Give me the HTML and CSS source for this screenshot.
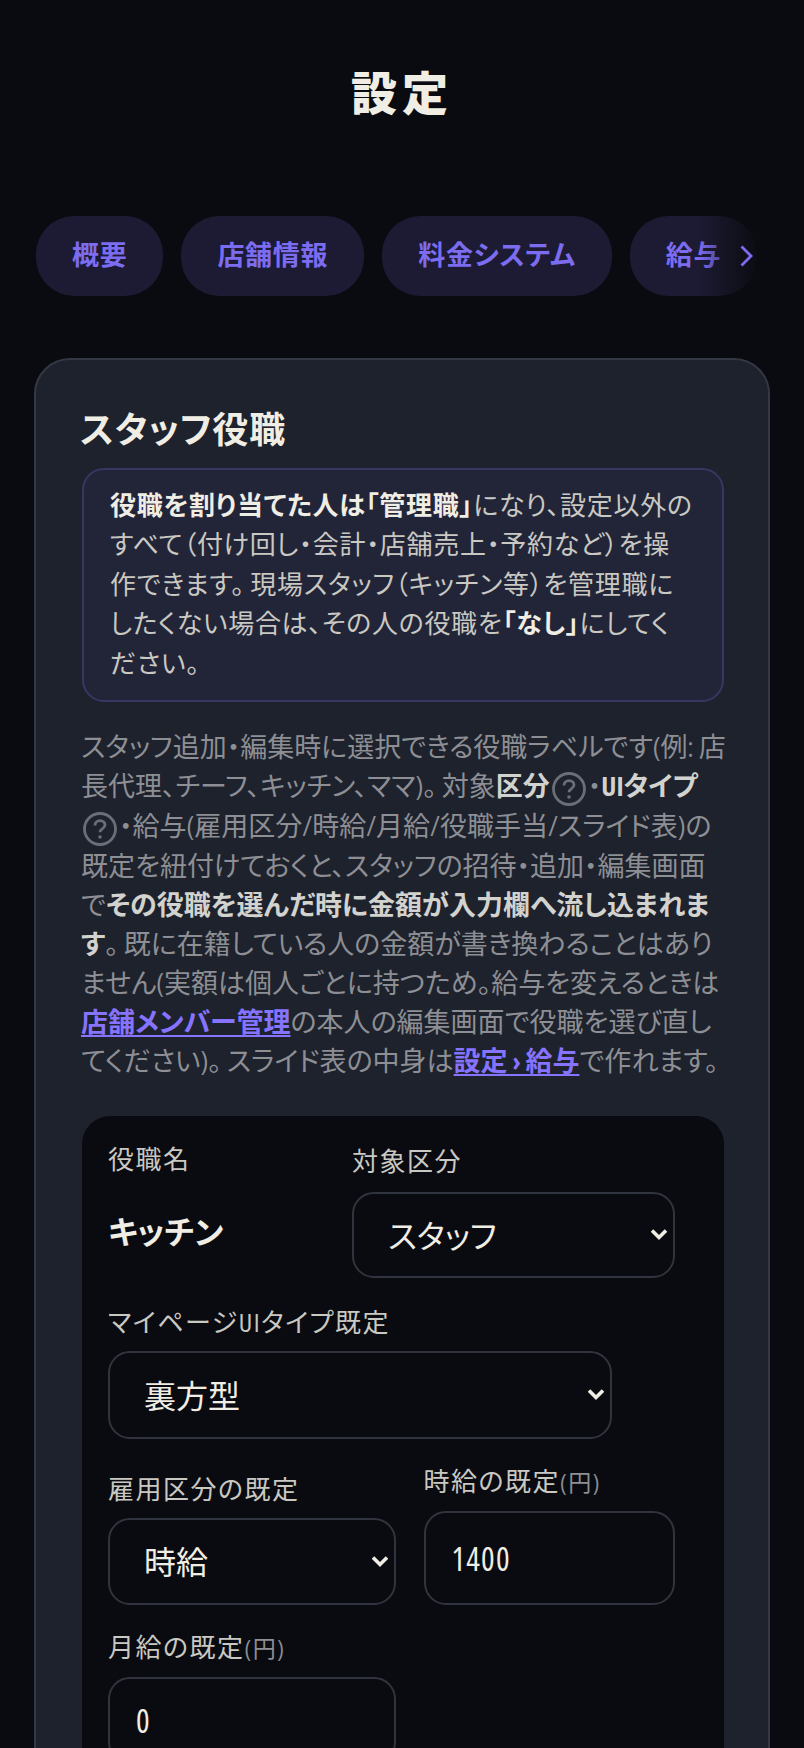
FILE: index.html
```html
<!DOCTYPE html>
<html lang="ja">
<head>
<meta charset="utf-8">
<title>設定</title>
<link rel="stylesheet" href="styles.css">
</head>
<body>
<main class="page">
  <h1 class="page-title">設定</h1>
  <nav class="tabs-wrap">
    <div class="tabs">
      <a class="tab">概要</a>
      <a class="tab">店舗情報</a>
      <a class="tab">料金システム</a>
      <a class="tab">給与</a>
      <a class="tab">通知</a>
    </div>
    <div class="tabs-fade">
      <svg class="tabs-chevron" viewBox="0 0 13 22" width="13" height="22"><path d="M1.5 1.5l9.5 9.5-9.5 9.5" fill="none" stroke="#7c6cf0" stroke-width="2.8"/></svg>
    </div>
  </nav>
  <section class="card">
    <h2 class="card-title">スタッフ役職</h2>
    <div class="callout"><strong>役職を割り当てた人は「管理職」</strong>になり、設定以外のすべて（付け回し・会計・店舗売上・予約など）を操作できます。 現場スタッフ（キッチン等）を管理職にしたくない場合は、その人の役職を<strong>「なし」</strong>にしてください。</div>
    <p class="desc">スタッフ追加・編集時に選択できる役職ラベルです(例: 店<br>長代理、チーフ、キッチン、ママ)。 対象<b>区分</b><svg class="help" viewBox="0 0 34 34" width="34" height="34"><circle cx="17" cy="17" r="15.5" fill="none" stroke="#6b6e77" stroke-width="2.8"/><path d="M12 13.5c0-3 2.2-4.8 5-4.8s5 1.8 5 4.3c0 3.6-5 3.6-5 7.2" fill="none" stroke="#6b6e77" stroke-width="2.8"/><circle cx="17" cy="25" r="1.8" fill="#6b6e77"/></svg>・<b>UIタイプ</b><br><svg class="help" viewBox="0 0 34 34" width="34" height="34"><circle cx="17" cy="17" r="15.5" fill="none" stroke="#6b6e77" stroke-width="2.8"/><path d="M12 13.5c0-3 2.2-4.8 5-4.8s5 1.8 5 4.3c0 3.6-5 3.6-5 7.2" fill="none" stroke="#6b6e77" stroke-width="2.8"/><circle cx="17" cy="25" r="1.8" fill="#6b6e77"/></svg>・給与(雇用区分/時給/月給/役職手当/スライド表)の<br>既定を紐付けておくと、スタッフの招待・追加・編集画面<br>で<b>その役職を選んだ時に金額が入力欄へ流し込まれま<br>す</b>。 既に在籍している人の金額が書き換わることはあり<br>ません(実額は個人ごとに持つため。給与を変えるときは<br><a class="link">店舗メンバー管理</a>の本人の編集画面で役職を選び直し<br>てください)。 スライド表の中身は<a class="link">設定 › 給与</a>で作れます。</p>
    <div class="role">
      <div class="row row-top">
        <div class="field field-name">
          <span class="label">役職名</span>
          <span class="role-name">キッチン</span>
        </div>
        <label class="field field-target">
          <span class="label label-target">対象区分</span>
          <span class="select-wrap">
            <select class="control control-select control-short"><option>スタッフ</option></select>
            <svg class="select-arrow select-arrow-short" viewBox="0 0 18 13" width="18" height="13"><path d="M2 2.5l7 7 7-7" fill="none" stroke="#f0ede4" stroke-width="3.6"/></svg>
          </span>
        </label>
      </div>
      <div class="row row-ui">
        <label class="field field-ui">
          <span class="label">マイページUIタイプ既定</span>
          <span class="select-wrap">
            <select class="control control-select control-ui"><option>裏方型</option></select>
            <svg class="select-arrow" viewBox="0 0 18 13" width="18" height="13"><path d="M2 2.5l7 7 7-7" fill="none" stroke="#f0ede4" stroke-width="3.6"/></svg>
          </span>
        </label>
      </div>
      <div class="row row-end">
        <label class="field field-half">
          <span class="label">雇用区分の既定</span>
          <span class="select-wrap">
            <select class="control control-select"><option>時給</option></select>
            <svg class="select-arrow" viewBox="0 0 18 13" width="18" height="13"><path d="M2 2.5l7 7 7-7" fill="none" stroke="#f0ede4" stroke-width="3.6"/></svg>
          </span>
        </label>
        <label class="field field-rate">
          <span class="label">時給の既定<small>(円)</small></span>
          <input class="control control-input control-tall" type="text" value="1400">
        </label>
      </div>
      <div class="row">
        <label class="field field-half">
          <span class="label">月給の既定<small>(円)</small></span>
          <input class="control control-input" type="text" value="0">
        </label>
      </div>
    </div>
  </section>
</main>
</body>
</html>
```
FILE: styles.css
```css
* { box-sizing: border-box; }
html { color-scheme: dark; }
body {
  margin: 0;
  height: 1748px;
  overflow: hidden;
  background: #0a0b10;
  color: #f0ede4;
  font-family: "Open Sans", "Noto Sans CJK JP", sans-serif;
  font-stretch: 75%;
  font-feature-settings: "palt";
  font-size: 26px;
}
.page { padding: 0 34px; }
.page-title {
  margin: 0;
  padding-top: 60px;
  height: 216px;
  font-size: 46px;
  line-height: 64px;
  font-weight: 900;
  letter-spacing: 5px;
  text-align: center;
}
.tabs-wrap { position: relative; margin-left: 2px; width: 726px; overflow: hidden; }
.tabs { display: flex; gap: 18px; }
.tab {
  flex: none;
  display: flex;
  align-items: center;
  height: 80px;
  padding: 0 36px 6px;
  border-radius: 38px;
  background: #1c1b33;
  color: #7c6cf0;
  font-size: 27px;
  font-weight: 700;
  letter-spacing: 0.7px;
}
.tabs-fade {
  position: absolute;
  top: 0;
  right: 0;
  bottom: 0;
  width: 64px;
  display: flex;
  align-items: center;
  justify-content: flex-end;
  padding-right: 9px;
  background: linear-gradient(to right, rgba(10,11,16,0), #0a0b10);
}
.card {
  margin-top: 62px;
  padding: 44px 44px 0 46px;
  border: 2px solid #343844;
  border-radius: 36px;
  background: #1e222d;
}
.card-title { margin: 0 0 0 -2px; font-size: 36px; line-height: 52px; font-weight: 700; letter-spacing: 0.9px; }
.callout {
  margin-top: 12px;
  padding: 16px 26px 17px;
  border: 2px solid #383662;
  border-radius: 22px;
  background: #222538;
  color: #c9c8c2;
  line-height: 39.4px;
  letter-spacing: 0.7px;
}
.callout strong { color: #f0ede4; font-weight: 700; }
.desc { margin: 25px 0 0 -1px; color: #8d8f94; font-size: 27px; line-height: 39px; white-space: nowrap; }
.desc b { color: #d2d2ce; font-weight: 700; }
.help { vertical-align: -10px; margin: 0 2px; }
.link { color: #8673ff; font-weight: 700; text-decoration: underline; text-underline-offset: 3px; }
.role {
  margin-top: 36px;
  padding: 24px 26px;
  height: 800px;
  border-radius: 28px;
  background: #0a0b10;
}
.row { display: flex; gap: 27.5px; margin-top: 23px; }
.row:first-child { margin-top: 0; }
.row-ui { margin-top: 25px; }
.row-end { align-items: flex-end; }
.field { display: flex; flex-direction: column; flex: none; }
.field-name { width: 216.5px; }
.field-target { width: 323px; }
.field-ui { width: 504px; }
.field-half { width: 288px; }
.field-rate { width: 251.5px; }
.label { color: #c9c8c2; line-height: 39px; margin-bottom: 9px; letter-spacing: 1.5px; }
.label-target { margin-top: 2px; margin-bottom: 11px; }
.label small { color: #8d8f94; font-size: 23px; }
.role-name { margin-top: 22px; font-size: 32px; line-height: 44px; font-weight: 700; }
.select-wrap { position: relative; display: block; }
.select-arrow { position: absolute; right: 7px; top: 37px; pointer-events: none; }
.select-arrow-short { top: 36px; }
.control {
  display: block;
  width: 100%;
  height: 87px;
  padding: 0 34px;
  border: 2px solid #30343e;
  border-radius: 22px;
  background: #0a0b10;
  color: #f0ede4;
  font: inherit;
  font-size: 32px;
  font-feature-settings: "palt";
}
.control-short { height: 86px; }
.control-ui { height: 88px; }
.control-select { appearance: none; }
.control-input { padding: 0 26px; outline: none; letter-spacing: 1.2px; }
.control-tall { height: 94px; }
```
